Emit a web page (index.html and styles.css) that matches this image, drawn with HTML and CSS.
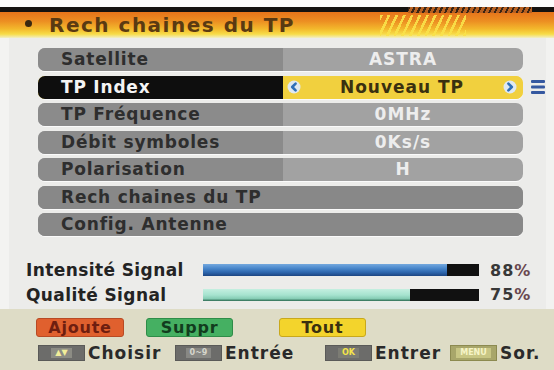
FILE: index.html
```html
<!DOCTYPE html>
<html lang="fr">
<head>
<meta charset="utf-8">
<title>Rech chaines du TP</title>
<link rel="stylesheet" href="styles.css">
</head>
<body>
<div class="screen">
  <div class="topgap"></div>
  <header class="title-bar">
    <span class="bullet"></span>
    <h1 class="title">Rech chaines du TP</h1>
    <span class="deco-dark"></span>
    <span class="deco-yellow"></span>
  </header>

  <main class="menu">
    <div class="line">
      <div class="row"><div class="label">Satellite</div><div class="value">ASTRA</div></div>
    </div>
    <div class="line">
      <div class="row selected">
        <div class="label">TP Index</div>
        <div class="value">
          <svg class="arrow" viewBox="0 0 14 14" width="14" height="14"><circle cx="7" cy="7" r="6.5" fill="#dfe9f2"/><path d="M8.6 3.6 L5.2 7 L8.6 10.4" fill="none" stroke="#2f6fb8" stroke-width="2.6" stroke-linecap="round" stroke-linejoin="round"/></svg>
          <span class="vtext">Nouveau TP</span>
          <svg class="arrow" viewBox="0 0 14 14" width="14" height="14"><circle cx="7" cy="7" r="6.5" fill="#dfe9f2"/><path d="M5.4 3.6 L8.8 7 L5.4 10.4" fill="none" stroke="#2f6fb8" stroke-width="2.6" stroke-linecap="round" stroke-linejoin="round"/></svg>
        </div>
      </div>
      <svg class="list-icon" viewBox="0 0 14 16" width="14" height="16"><rect x="0" y="1" width="14" height="3" rx="1" fill="#3558a0"/><rect x="0" y="6.5" width="14" height="3" rx="1" fill="#3558a0"/><rect x="0" y="12" width="14" height="3" rx="1" fill="#3558a0"/></svg>
    </div>
    <div class="line">
      <div class="row"><div class="label">TP Fréquence</div><div class="value">0MHz</div></div>
    </div>
    <div class="line">
      <div class="row"><div class="label">Débit symboles</div><div class="value">0Ks/s</div></div>
    </div>
    <div class="line">
      <div class="row"><div class="label">Polarisation</div><div class="value">H</div></div>
    </div>
    <div class="line">
      <div class="row full"><div class="label">Rech chaines du TP</div></div>
    </div>
    <div class="line">
      <div class="row full"><div class="label">Config. Antenne</div></div>
    </div>
  </main>

  <section class="signal">
    <div class="sig-row">
      <span class="sig-label">Intensité Signal</span>
      <div class="bar"><div class="fill fill-blue" style="width:88.4%"></div></div>
      <span class="pct">88<span class="pc">%</span></span>
    </div>
    <div class="sig-row">
      <span class="sig-label">Qualité Signal</span>
      <div class="bar"><div class="fill fill-teal" style="width:75%"></div></div>
      <span class="pct">75<span class="pc">%</span></span>
    </div>
  </section>

  <footer class="footer">
    <div class="buttons">
      <span class="btn btn-red">Ajoute</span>
      <span class="btn btn-green">Suppr</span>
      <span class="btn btn-yellow">Tout</span>
    </div>
    <div class="legend">
      <div class="leg"><span class="key"><span class="key-in">▲▼</span></span><span class="leg-text">Choisir</span></div>
      <div class="leg"><span class="key"><span class="key-in dim">0~9</span></span><span class="leg-text">Entrée</span></div>
      <div class="leg"><span class="key"><span class="key-in ok">OK</span></span><span class="leg-text">Entrer</span></div>
      <div class="leg"><span class="key key-menu"><span class="key-in menu">MENU</span></span><span class="leg-text">Sor.</span></div>
    </div>
  </footer>
</div>
</body>
</html>
```

FILE: styles.css
```css
* { box-sizing: border-box; }
html, body { margin: 0; padding: 0; }
body {
  width: 554px;
  height: 370px;
  overflow: hidden;
  background: #ececea;
  font-family: "DejaVu Sans", "Liberation Sans", sans-serif;
  font-weight: bold;
}
.screen {
  width: 554px;
  height: 370px;
  display: flex;
  flex-direction: column;
  background: linear-gradient(to right, #f3f3f1 0, #f3f3f1 9px, #ececea 9px, #ececea 546px, #f2f2f0 546px);
}
.topgap { height: 7px; background: #fbfbfb; flex: none; }

.title-bar {
  position: relative;
  flex: none;
  height: 31px;
  border-top: 5px solid #141210;
  background: linear-gradient(to bottom, #e6741a 0%, #ec8e22 35%, #f3b82c 65%, #f7dc48 85%, #f1efc8 100%);
  display: flex;
  align-items: center;
  padding-left: 25px;
  padding-bottom: 1px;
}
.bullet {
  width: 7px; height: 7px;
  border-radius: 50%;
  background: #3a2810;
  margin-right: 17px;
  margin-top: -3px;
}
.title {
  margin: 0;
  font-size: 20px;
  letter-spacing: 1.5px;
  color: #5a3a12;
  line-height: 1;
}
.deco-dark {
  position: absolute;
  left: 408px; top: -5px;
  width: 124px; height: 6px;
  background: repeating-linear-gradient(115deg, #3a2414 0 2px, #b86020 2px 5px);
}
.deco-yellow {
  position: absolute;
  left: 380px; top: 3px;
  width: 86px; height: 21px;
  background: repeating-linear-gradient(115deg, #f9e24a 0 2.5px, rgba(0,0,0,0) 2.5px 7px);
  opacity: 0.9;
}

.menu {
  flex: none;
  padding: 10px 0 0 38px;
  display: flex;
  flex-direction: column;
  gap: 4.5px;
}
.line { display: flex; align-items: center; gap: 8px; }
.row {
  width: 485px;
  height: 23px;
  border-radius: 7px;
  overflow: hidden;
  display: flex;
  background: #a2a2a2;
  box-shadow: 0 1px 0 #fafafa;
}
.label {
  width: 245px;
  background: #8b8b8b;
  color: #2e2e2e;
  font-size: 17px;
  letter-spacing: 0.8px;
  line-height: 23px;
  padding-left: 23px;
  white-space: nowrap;
}
.value {
  flex: 1;
  color: #ededed;
  font-size: 17px;
  letter-spacing: 1px;
  line-height: 23px;
  text-align: center;
  border-radius: 7px 0 0 7px;
}
.row.full { background: #888888; }
.row.full .label { width: 100%; background: #888888; }
.row.selected { background: #f1d03e; }
.row.selected .label { background: #0e0e0e; color: #f4f4f4; }
.row.selected .value {
  color: #3a3010;
  display: flex;
  align-items: center;
  justify-content: space-between;
  padding: 0 6px 0 4px;
  border-radius: 7px;
  background: #f1d03e;
}
.vtext { line-height: 23px; }
.arrow { display: block; }
.list-icon { display: block; }

.signal {
  flex: none;
  margin-top: 22px;
  padding-left: 26px;
}
.sig-row {
  height: 24.5px;
  display: grid;
  grid-template-columns: 177px 276px auto;
  align-items: center;
}
.sig-label {
  font-size: 17px;
  letter-spacing: 0.4px;
  color: #232323;
  white-space: nowrap;
}
.bar {
  height: 12px;
  background: #111;
  display: flex;
}
.fill { height: 100%; }
.fill-blue {
  background: linear-gradient(to bottom, #74a8de 0%, #4a88cc 35%, #2d66ad 70%, #1c4582 100%);
}
.fill-teal {
  background: linear-gradient(to bottom, #c4efe0 0%, #a6e3cf 50%, #86cdb5 80%, #2b6a52 100%);
}
.pct {
  padding-left: 11px;
  font-size: 16px;
  letter-spacing: 1px;
  color: #383838;
}
.pc { color: #6a4850; }

.footer {
  flex: 1;
  margin-top: 2px;
  background: #dedcc6;
  padding: 9px 0 0 36px;
  display: flex;
  flex-direction: column;
  gap: 7px;
}
.buttons { display: flex; align-items: center; }
.btn {
  width: 88px;
  height: 19px;
  border-radius: 3px;
  text-align: center;
  font-size: 16px;
  letter-spacing: 0.8px;
  line-height: 18px;
}
.btn-red { background: #e0602e; color: #6e1e10; border: 1px solid #b84a24; }
.btn-green { background: #45b062; color: #123c1e; border: 1px solid #2e8c48; margin-left: 22px; width: 87px; }
.btn-yellow { background: #f3d42c; color: #3a3010; border: 1px solid #c8a81c; margin-left: 46px; width: 87px; }

.legend {
  display: grid;
  grid-template-columns: 137px 150px 125px auto;
  padding-left: 2px;
}
.leg { display: flex; align-items: center; gap: 3px; }
.key {
  width: 47px;
  height: 16px;
  background: #6c6c6a;
  border: 1px solid #5a5a58;
  display: flex;
  align-items: center;
  justify-content: center;
}
.key-in {
  font-size: 8px;
  line-height: 10px;
  padding: 0 4px;
  background: #8c8c84;
  color: #f2ee9a;
  letter-spacing: 0;
}
.key-in.dim { color: #d6d6cc; background: #888884; }
.key-in.ok { color: #f4e44a; background: #7c7c74; }
.key-menu { background: #a8a66a; border-color: #8c8a50; }
.key-in.menu { background: #c8c684; color: #f6f4c8; }
.leg-text {
  font-size: 17px;
  letter-spacing: 1px;
  color: #2a2a2a;
  line-height: 18px;
}
```
